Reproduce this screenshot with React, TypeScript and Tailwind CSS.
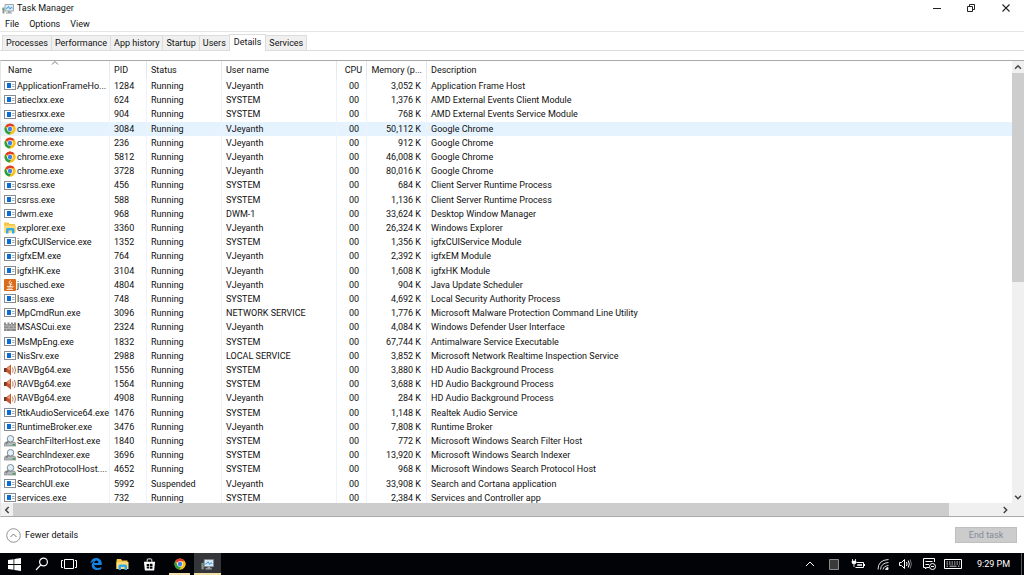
type IconKind = "app" | "chrome" | "folder" | "java" | "wall" | "sound" | "search";

type Process = {
  icon: IconKind;
  name: string;
  pid: number;
  status: string;
  user: string;
  memory: string;
  description: string;
};

function row(
  icon: IconKind,
  name: string,
  pid: number,
  user: string,
  memory: string,
  description: string,
  status = "Running",
): Process {
  return { icon, name, pid, status, user, memory, description };
}

const processes: Process[] = [
  row("app", "ApplicationFrameHo...", 1284, "VJeyanth", "3,052 K", "Application Frame Host"),
  row("app", "atieclxx.exe", 624, "SYSTEM", "1,376 K", "AMD External Events Client Module"),
  row("app", "atiesrxx.exe", 904, "SYSTEM", "768 K", "AMD External Events Service Module"),
  row("chrome", "chrome.exe", 3084, "VJeyanth", "50,112 K", "Google Chrome"),
  row("chrome", "chrome.exe", 236, "VJeyanth", "912 K", "Google Chrome"),
  row("chrome", "chrome.exe", 5812, "VJeyanth", "46,008 K", "Google Chrome"),
  row("chrome", "chrome.exe", 3728, "VJeyanth", "80,016 K", "Google Chrome"),
  row("app", "csrss.exe", 456, "SYSTEM", "684 K", "Client Server Runtime Process"),
  row("app", "csrss.exe", 588, "SYSTEM", "1,136 K", "Client Server Runtime Process"),
  row("app", "dwm.exe", 968, "DWM-1", "33,624 K", "Desktop Window Manager"),
  row("folder", "explorer.exe", 3360, "VJeyanth", "26,324 K", "Windows Explorer"),
  row("app", "igfxCUIService.exe", 1352, "SYSTEM", "1,356 K", "igfxCUIService Module"),
  row("app", "igfxEM.exe", 764, "VJeyanth", "2,392 K", "igfxEM Module"),
  row("app", "igfxHK.exe", 3104, "VJeyanth", "1,608 K", "igfxHK Module"),
  row("java", "jusched.exe", 4804, "VJeyanth", "904 K", "Java Update Scheduler"),
  row("app", "lsass.exe", 748, "SYSTEM", "4,692 K", "Local Security Authority Process"),
  row("app", "MpCmdRun.exe", 3096, "NETWORK SERVICE", "1,776 K", "Microsoft Malware Protection Command Line Utility"),
  row("wall", "MSASCui.exe", 2324, "VJeyanth", "4,084 K", "Windows Defender User Interface"),
  row("app", "MsMpEng.exe", 1832, "SYSTEM", "67,744 K", "Antimalware Service Executable"),
  row("app", "NisSrv.exe", 2988, "LOCAL SERVICE", "3,852 K", "Microsoft Network Realtime Inspection Service"),
  row("sound", "RAVBg64.exe", 1556, "SYSTEM", "3,880 K", "HD Audio Background Process"),
  row("sound", "RAVBg64.exe", 1564, "SYSTEM", "3,688 K", "HD Audio Background Process"),
  row("sound", "RAVBg64.exe", 4908, "VJeyanth", "284 K", "HD Audio Background Process"),
  row("app", "RtkAudioService64.exe", 1476, "SYSTEM", "1,148 K", "Realtek Audio Service"),
  row("app", "RuntimeBroker.exe", 3476, "VJeyanth", "7,808 K", "Runtime Broker"),
  row("search", "SearchFilterHost.exe", 1840, "SYSTEM", "772 K", "Microsoft Windows Search Filter Host"),
  row("search", "SearchIndexer.exe", 3696, "SYSTEM", "13,920 K", "Microsoft Windows Search Indexer"),
  row("search", "SearchProtocolHost....", 4652, "SYSTEM", "968 K", "Microsoft Windows Search Protocol Host"),
  row("app", "SearchUI.exe", 5992, "VJeyanth", "33,908 K", "Search and Cortana application", "Suspended"),
  row("app", "services.exe", 732, "SYSTEM", "2,384 K", "Services and Controller app"),
];

const tabs = ["Processes", "Performance", "App history", "Startup", "Users", "Details", "Services"];

function ChromeIcon({ className }: { className: string }) {
  return (
    <svg viewBox="0 0 24 24" className={className} aria-hidden="true">
      <circle cx="12" cy="12" r="11" fill="#fbc116" />
      <path d="M12 12 L2.5 6.4 A11 11 0 0 1 21.8 7 L12 7 Z" fill="#e33b2e" />
      <path d="M2.5 6.4 A11 11 0 0 0 11 23 L16.5 14.5 L12 12 L7.5 14.5 Z" fill="#2b9f4a" />
      <path d="M12 7 L21.8 7 A11 11 0 0 1 11 23 L16.5 14.5 Z" fill="#fbc116" />
      <circle cx="12" cy="12" r="5.6" fill="#fff" />
      <circle cx="12" cy="12" r="4.4" fill="#3f7fe8" />
    </svg>
  );
}

function FolderIcon({ className }: { className: string }) {
  return (
    <svg viewBox="0 0 24 22" className={className} aria-hidden="true">
      <path d="M0 2 L1 0 H9 L11 3 H22 V20 H0 Z" fill="#f4c542" />
      <path d="M0 6 H24 V20 H0 Z" fill="#fddc7a" />
      <path d="M4 22 V14 Q4 11 7 11 H18 Q21 11 21 14 V22 H16 V16 H9 V22 Z" fill="#35a9e8" />
    </svg>
  );
}

function MonitorIcon({ className }: { className: string }) {
  return (
    <svg viewBox="0 0 24 20" className={className} aria-hidden="true">
      <path d="M1 7 H5 V19 H1 Z" fill="#8b9a94" />
      <path d="M1 9 H3 V12 H1 Z" fill="#3fa34d" />
      <path d="M6 1 H23 V14 H6 Z" fill="#e9eef2" stroke="#7d8790" strokeWidth="1.4" />
      <path d="M8 3 H21 V12 H8 Z" fill="#cfe9fb" />
      <path d="M8 9 L11 8 L13 5 L16 10 L18 7 L21 8" fill="none" stroke="#2682c9" strokeWidth="1.5" />
      <path d="M12 14 H17 V17 H20 V19 H8 V17 H12 Z" fill="#9aa3aa" />
    </svg>
  );
}

function ProcessIcon({ kind }: { kind: IconKind }) {
  const size = "h-3 w-3 shrink-0";
  if (kind === "chrome") return <ChromeIcon className={size} />;
  if (kind === "folder") return <FolderIcon className={size} />;
  if (kind === "java")
    return (
      <svg viewBox="0 0 24 24" className={size} aria-hidden="true">
        <rect width="24" height="24" rx="2" fill="#dc6b1c" />
        <path d="M13 3 Q8 7 12 10 Q14 12 12 14 M16 6 Q12 9 15 12" fill="none" stroke="#fff" strokeWidth="1.8" />
        <path d="M6 15 H17 M7 18 H16 M5 21 H18 M17 14 Q20 15 17 17" fill="none" stroke="#fff" strokeWidth="1.6" />
      </svg>
    );
  if (kind === "wall")
    return (
      <svg viewBox="0 0 24 24" className={size} aria-hidden="true">
        <path d="M0 1 H4 V4 H7 V1 H11 V4 H14 V1 H18 V4 H20 V1 H24 V18 H0 Z" fill="#8d8d8d" />
        <path d="M0 8 H24 M0 13 H24 M6 4 V8 M15 4 V8 M10 8 V13 M19 8 V13 M5 13 V18 M14 13 V18" stroke="#c9c9c9" strokeWidth="1.2" />
      </svg>
    );
  if (kind === "sound")
    return (
      <svg viewBox="0 0 24 24" className={size} aria-hidden="true">
        <path d="M0 8 H5 L14 1 V23 L5 16 H0 Z" fill="#c9562f" />
        <path d="M0 8 H5 V16 H0 Z" fill="#6d3a2a" />
        <path d="M6 9 L12 4 V13 Z" fill="#ee9a70" />
        <path d="M17 7 Q19.5 12 17 17 M21 4 Q25 12 21 20" fill="none" stroke="#a2705e" strokeWidth="1.8" />
      </svg>
    );
  if (kind === "search")
    return (
      <svg viewBox="0 0 24 24" className={size} aria-hidden="true">
        <path d="M3 14 H21 L24 18 V22 H0 V18 Z" fill="#b4b9bd" stroke="#74797d" strokeWidth="1.2" />
        <path d="M17 18 H22 V21 H17 Z" fill="#3fa34d" />
        <path d="M9 12 L4 18" stroke="#74797d" strokeWidth="2.5" />
        <circle cx="13" cy="7.5" r="6.5" fill="#dff0fb" stroke="#7c858c" strokeWidth="1.9" />
      </svg>
    );
  return (
    <svg viewBox="0 0 12 12" className={size} aria-hidden="true">
      <rect x="0.5" y="1.5" width="11" height="8" fill="#fff" stroke="#858c94" />
      <rect x="3" y="3" width="4" height="5" fill="#0a6cd6" />
      <path d="M8 4.5 H10.5 M8 6.5 H10.5" stroke="#9aa5b0" strokeWidth="0.9" />
    </svg>
  );
}

function Chevron({ d }: { d: string }) {
  return (
    <svg viewBox="0 0 12 12" className="size-[10px]" aria-hidden="true">
      <path d={d} fill="none" stroke="currentColor" strokeWidth="1.8" />
    </svg>
  );
}

const UP = "M2.5 8 L6 4.5 L9.5 8";
const DOWN = "M2.5 4.5 L6 8 L9.5 4.5";
const LEFT = "M8 2.5 L4.5 6 L8 9.5";
const RIGHT = "M4.5 2.5 L8 6 L4.5 9.5";

function TitleBar() {
  return (
    <header className="flex h-[17px] items-center pl-[2px]">
      <MonitorIcon className="h-[10px] w-3" />
      <h1 className="ml-[3px] flex-1 font-normal">Task Manager</h1>
      <div className="flex self-start text-[#222]">
        <button aria-label="Minimize" className="grid h-4 w-[34px] place-items-center">
          <svg viewBox="0 0 10 10" className="size-[10px]"><path d="M1 5.5 H9" stroke="currentColor" /></svg>
        </button>
        <button aria-label="Restore" className="grid h-4 w-[34px] place-items-center">
          <svg viewBox="0 0 10 10" className="size-[10px]" fill="none" stroke="currentColor">
            <path d="M1.5 3.5 H6.5 V8.5 H1.5 Z M3.5 3.5 V1.5 H8.5 V6.5 H6.5" />
          </svg>
        </button>
        <button aria-label="Close" className="grid h-4 w-[36px] place-items-center">
          <svg viewBox="0 0 10 10" className="size-[10px]"><path d="M1.5 1.5 L8.5 8.5 M8.5 1.5 L1.5 8.5" stroke="currentColor" strokeWidth="1.1" /></svg>
        </button>
      </div>
    </header>
  );
}

function Tabs() {
  return (
    <div role="tablist" className="flex h-[17px] items-end border-b border-[#dcdcdc] pl-[2px]">
      {tabs.map((tab) =>
        tab === "Details" ? (
          <button key={tab} role="tab" aria-selected="true" className="-mb-px h-[17px] border border-b-0 border-[#dcdcdc] bg-white px-1 pb-[2px]">
            {tab}
          </button>
        ) : (
          <button key={tab} role="tab" aria-selected="false" className="h-[15px] border border-r-0 border-b-0 border-[#dcdcdc] bg-[#f0f0f0] px-[3px] last:border-r last:border-l-0">
            {tab}
          </button>
        ),
      )}
    </div>
  );
}

function ProcessTable() {
  const head = "h-[18px] border-r border-[#e3e9f0] p-0 font-normal whitespace-nowrap";
  const cell = "border-r border-[#edf3fa] p-0 whitespace-nowrap";
  return (
    <table className="w-full table-fixed border-separate border-spacing-0">
      <colgroup>
        <col className="w-[109px]" />
        <col className="w-[37px]" />
        <col className="w-[75px]" />
        <col className="w-[115px]" />
        <col className="w-[30px]" />
        <col className="w-[60px]" />
        <col />
      </colgroup>
      <thead>
        <tr className="text-left">
          <th scope="col" aria-sort="ascending" className={`${head} relative pl-[7px]`}>
            Name
            <svg viewBox="0 0 8 4" className="absolute top-0 left-[50px] h-1 w-2 text-[#777]" aria-hidden="true">
              <path d="M1 3.5 L4 0.5 L7 3.5" fill="none" stroke="currentColor" />
            </svg>
          </th>
          <th scope="col" className={`${head} pl-1`}>PID</th>
          <th scope="col" className={`${head} pl-1`}>Status</th>
          <th scope="col" className={`${head} pl-1`}>User name</th>
          <th scope="col" className={`${head} pr-1 text-right`}>CPU</th>
          <th scope="col" className={`${head} pr-1 text-right`}>Memory (p...</th>
          <th scope="col" className="p-0 pl-1 font-normal">Description</th>
        </tr>
      </thead>
      <tbody>
        {processes.map((p) => (
          <tr key={p.pid} className="h-[14px] nth-[4]:bg-[#e5f3ff] nth-[5n+3]:h-[15px]">
            <td className={cell}>
              <div className="flex h-[14px] items-center gap-px pl-[3px]">
                <ProcessIcon kind={p.icon} />
                <span>{p.name}</span>
              </div>
            </td>
            <td className={`${cell} pl-1`}>{p.pid}</td>
            <td className={`${cell} pl-1`}>{p.status}</td>
            <td className={`${cell} pl-1`}>{p.user}</td>
            <td className={`${cell} pr-[7px] text-right`}>00</td>
            <td className={`${cell} pr-[5px] text-right`}>{p.memory}</td>
            <td className="p-0 pl-1 whitespace-nowrap">{p.description}</td>
          </tr>
        ))}
      </tbody>
    </table>
  );
}

function VerticalScrollbar() {
  return (
    <div className="flex w-3 shrink-0 flex-col bg-[#f0f0f0] text-[#444]">
      <button aria-label="Scroll up" className="grid h-3 place-items-center"><Chevron d={UP} /></button>
      <div className="flex flex-1 flex-col">
        <div className="flex-1 bg-[#cdcdcd]" />
        <div className="flex-1" />
      </div>
      <button aria-label="Scroll down" className="grid h-3 place-items-center"><Chevron d={DOWN} /></button>
    </div>
  );
}

function HorizontalScrollbar() {
  return (
    <div className="flex h-[13px] shrink-0 bg-[#f0f0f0] pr-3 text-[#444]">
      <button aria-label="Scroll left" className="grid w-3 place-items-center"><Chevron d={LEFT} /></button>
      <div className="flex flex-1">
        <div className="w-[95%] bg-[#cdcdcd]" />
      </div>
      <button aria-label="Scroll right" className="grid w-[14px] place-items-center"><Chevron d={RIGHT} /></button>
    </div>
  );
}

function Taskbar() {
  const item = "grid h-full w-[27px] place-items-center";
  return (
    <nav className="flex h-[22px] shrink-0 items-center bg-[#020306] pl-px text-white">
      <button aria-label="Start" className={item}>
        <svg viewBox="0 0 13 13" className="size-[13px]" fill="#fff">
          <path d="M0 2 L5.5 1.2 V6 H0 Z M6.3 1.1 L13 0 V6 H6.3 Z M0 6.9 H5.5 V11.8 L0 11 Z M6.3 6.9 H13 V13 L6.3 11.9 Z" />
        </svg>
      </button>
      <button aria-label="Search" className={item}>
        <svg viewBox="0 0 14 14" className="size-[14px]" fill="none" stroke="#fff" strokeWidth="1.2">
          <circle cx="8.5" cy="5" r="3.9" />
          <path d="M5.8 7.8 L1 13" />
        </svg>
      </button>
      <button aria-label="Task view" className={item}>
        <svg viewBox="0 0 16 12" className="h-3 w-4" fill="none" stroke="#fff">
          <path d="M3.5 1.5 H12.5 V10.5 H3.5 Z M2 2.5 H0.5 V9.5 H2 M14 2.5 H15.5 V9.5 H14" />
        </svg>
      </button>
      <button aria-label="Edge" className={item}>
        <svg viewBox="0 0 24 24" className="size-3" fill="#1683e2">
          <path d="M0.5 11 C1.5 4 6 0 12.3 0 C19.5 0 23.5 5 23.5 11 V14 H8.5 C8.8 18 12 20 15.5 20 C18 20 20.5 19.2 22.3 18 V22.5 C20 23.6 17.5 24 14.5 24 C8 24 3.5 20.5 3.5 14.5 C3.5 11 5.5 8 9 6.5 C5.5 6.6 2.5 8.5 0.5 11 Z M8.7 9.8 H16.8 C16.8 6.8 15.4 5 12.9 5 C10.5 5 9 6.9 8.7 9.8 Z" />
        </svg>
      </button>
      <button aria-label="File Explorer" className={item}><FolderIcon className="h-[11px] w-[13px]" /></button>
      <button aria-label="Store" className={item}>
        <svg viewBox="0 0 14 14" className="size-[13px]">
          <path d="M1 4 H13 L12 13.5 H2 Z" fill="#fff" />
          <path d="M4.5 4 V2 Q4.5 1 5.5 1 H8.5 Q9.5 1 9.5 2 V4" fill="none" stroke="#fff" />
          <path d="M4 6.5 H6.6 V8.5 H4 Z M7.4 6.3 H10.2 V8.5 H7.4 Z M4 9.2 H6.6 V11.3 H4 Z M7.4 9.2 H10.2 V11.6 H7.4 Z" fill="#020306" />
        </svg>
      </button>
      <button aria-label="Chrome" className="ml-[6px] grid h-full w-[21px] place-items-center border-y-2 border-t-transparent border-b-[#f5dfa8]">
        <ChromeIcon className="size-3" />
      </button>
      <button aria-label="Task Manager" className="ml-1 grid h-full w-[27px] place-items-center border-y-2 border-t-[#333538] border-b-[#f5dfa8] bg-[#333538]">
        <MonitorIcon className="h-[11px] w-[13px]" />
      </button>

      <div className="ml-auto flex h-full items-center">
        <button aria-label="Show hidden icons" className="grid w-6 place-items-center">
          <svg viewBox="0 0 10 6" className="h-[6px] w-[10px]" fill="none" stroke="#fff"><path d="M1 5 L5 1 L9 5" /></svg>
        </button>
        <svg viewBox="0 0 10 11" className="ml-[7px] h-[11px] w-[10px]" aria-hidden="true">
          <path d="M0.5 0.5 H9.5 V10.5 H0.5 Z" fill="#3a3a3a" stroke="#8c8c8c" />
        </svg>
        <svg viewBox="0 0 14 10" className="ml-3 h-[10px] w-[14px]" fill="none" stroke="#fff" aria-hidden="true">
          <path d="M5.5 3.5 H12.5 V8.5 H4.5" />
          <path d="M6.5 5 H11 V7 H6 Z" fill="#ccc" stroke="none" />
          <path d="M13.5 5 V7" />
          <path d="M1.5 0 V2 M4.5 0 V2 M3 5 V8" strokeWidth="0.8" />
          <path d="M1 2 H5 V3.5 Q5 5 3 5 Q1 5 1 3.5 Z" fill="#fff" strokeWidth="0.6" />
        </svg>
        <svg viewBox="0 0 12 12" className="ml-3 size-3" fill="none" stroke="#ddd" aria-hidden="true">
          <path d="M1 11.5 Q1 2 11.5 1.5 M3.5 11.5 Q4 5 11.5 4.5 M6 11.5 Q6.5 8 11.5 7.5" />
          <path d="M8.5 11.5 Q8.5 10 11 9.5 V11.5 Z" fill="#fff" />
        </svg>
        <svg viewBox="0 0 13 12" className="ml-[10px] h-3 w-[13px]" fill="none" stroke="#fff" aria-hidden="true">
          <path d="M0.5 4.5 H2.5 L5.5 1.5 V10.5 L2.5 7.5 H0.5 Z M7.5 4 Q8.5 6 7.5 8 M9.3 2.5 Q11.2 6 9.3 9.5" />
          <path d="M11.2 1.5 Q13.5 6 11.2 10.5" stroke="#777" />
        </svg>
        <svg viewBox="0 0 13 12" className="ml-[11px] h-3 w-[13px]" fill="none" stroke="#fff" aria-hidden="true">
          <path d="M6 9.5 H3.5 L2.5 11 V9.5 H0.5 V0.5 H11.5 V4 M2.5 3.5 H9.5 M2.5 6.5 H6" />
          <circle cx="9.5" cy="8.5" r="3" />
          <path d="M8 8.5 H11" />
        </svg>
        <svg viewBox="0 0 18 10" className="ml-2 h-[10px] w-[18px]" fill="none" stroke="#fff" aria-hidden="true">
          <path d="M0.5 0.5 H17.5 V9.5 H0.5 Z" />
          <path d="M2.5 3 H16 M2.5 5 H16" strokeDasharray="1.5 1" strokeWidth="0.8" />
          <path d="M2.5 7.2 H4 M5.5 7.2 H12.5 M14 7.2 H15.5" strokeWidth="0.8" />
        </svg>
        <time className="ml-[15px] w-8 whitespace-nowrap">9:29 PM</time>
        <button aria-label="Show desktop" className="ml-3 h-full w-[3px] border-l border-[#555]" />
      </div>
    </nav>
  );
}

export default function App() {
  return (
    <div className="flex h-screen flex-col overflow-hidden bg-white font-['Roboto','Noto_Sans',sans-serif] text-[9px] leading-[13px] text-[#111]">
      <TitleBar />
      <div role="menubar" className="flex h-[15px] items-center gap-[10px] border-b border-[#e6e6e6] pl-[5px]">
        <button role="menuitem">File</button>
        <button role="menuitem">Options</button>
        <button role="menuitem">View</button>
      </div>
      <div className="pt-[2px]">
        <Tabs />
      </div>
      <main className="mt-[9px] flex min-h-0 flex-1 flex-col border-y border-l border-y-[#a9a9a9] border-l-[#e6e6e6]">
        <div className="flex min-h-0 flex-1">
          <div className="min-w-0 flex-1 overflow-hidden">
            <ProcessTable />
          </div>
          <VerticalScrollbar />
        </div>
        <HorizontalScrollbar />
      </main>
      <footer className="flex h-9 shrink-0 items-center justify-between pr-[7px] pl-[6px]">
        <button className="flex items-center gap-1">
          <svg viewBox="0 0 15 15" className="size-[15px]" fill="none" aria-hidden="true">
            <circle cx="7.5" cy="7.5" r="6.8" stroke="#888" strokeWidth="0.9" />
            <path d="M4.5 9 L7.5 6 L10.5 9" stroke="#777" />
          </svg>
          Fewer details
        </button>
        <button disabled className="h-4 w-[62px] border border-[#bfbfbf] bg-[#cccccc] text-[#838b99]">
          End task
        </button>
      </footer>
      <Taskbar />
    </div>
  );
}
